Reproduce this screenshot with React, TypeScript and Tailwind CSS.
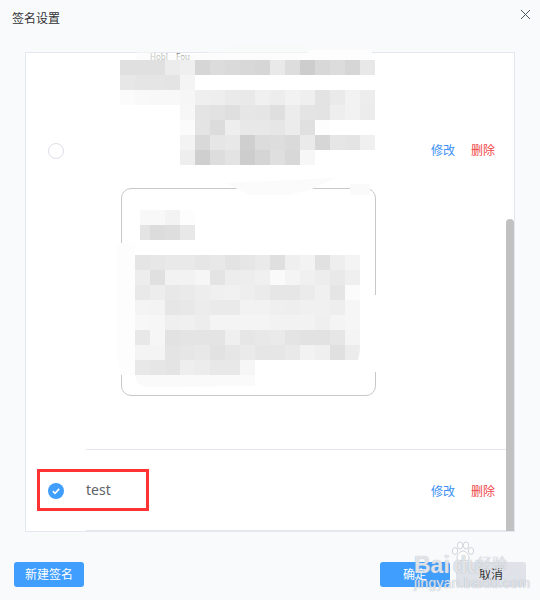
import React from "react";

const firstMosaic = [
  "e0 e0 e0 ec ef d6 dc da d8 d6 e9 dd cd d8 dc d6 e8",
  "e7 e5 e5 e4 f4",
  "fb f9 f8 f8 f6 ef ee ea e9 f0 ed f2 ef e3 ea f2 ed",
  "- - - - f7 e4 e2 df e6 e5 df ec e4 e3 ee f2 ec",
  "- - - - fb e4 dc ee e8 e8 e6 ec e0 fd",
  "- - - - f3 d9 e6 e8 cf dc dd da ea d6 e6 e4 f0",
  "- - - - ee cf dd e3 cd d5 df d8 f7",
];

const cardTitleMosaic = ["f8 f8 f3 fd", "e4 dc de e8"];

const cardBodyMosaic = [
  "e5 e7 e9 e9 e6 e8 e3 e6 ea df ef f3 e1 ee f4",
  "ed e0 f2 f2 f6 e4 ed ed f0 fa f4 f0 ed e9 ef",
  "e9 ed e8 ea ed f0 f1 ee eb e6 e6 eb f0 e5 fb",
  "f4 f3 e6 e8 ec ea ea f2 f2 ef ee f0 f0 ee f6",
  "f7 f6 ef f0 ed f4 f4 f4 f4 f2 f2 f2 ef f4 f6",
  "e8 f6 e2 e4 e4 e4 ef e6 e8 ea e4 e2 e2 e6 f4",
  "f4 f4 e4 e6 e8 e2 e6 ea e6 e6 e9 f2 ef e0 ec",
  "e8 e6 e4 ee ec e8 e8 f6",
];

const Mosaic = ({ rows }: { rows: string[] }) => (
  <div className="flex flex-col">
    {rows.map((row, i) => (
      <div key={i} className="flex h-[15px]">
        {row.split(" ").map((c, j) => (
          <div
            key={j}
            className="w-[15px] h-[15px]"
            style={{ backgroundColor: c === "-" ? "transparent" : `#${c}${c}${c}` }}
          />
        ))}
      </div>
    ))}
  </div>
);

const RowActions = () => (
  <div className="flex gap-4 text-xs leading-4">
    <span className="text-[#3b8ff5]">修改</span>
    <span className="text-[#f04545]">删除</span>
  </div>
);

export default function App() {
  return (
    <div className="relative w-[540px] h-[600px] overflow-hidden bg-[#f9fafc] font-['Noto_Sans','Noto_Sans_CJK_SC',sans-serif]">
      {/* Header */}
      <div className="flex justify-between h-[52px] pl-3 pr-[9px]">
        <h1 className="mt-[11px] text-xs leading-4 font-normal text-[#303133]">签名设置</h1>
        <svg className="mt-[9px] w-[11px] h-[11px] text-[#4a5a66]" viewBox="0 0 11 11" fill="none" stroke="currentColor" strokeWidth="1">
          <path d="M1 1l9 9M10 1l-9 9" />
        </svg>
      </div>

      {/* Signature list */}
      <div className="relative ml-[25px] w-[490px] h-[480px] overflow-hidden bg-white border border-[#e4e7ed]">
        <div className="pr-2">
          <div className="flex h-[135px]">
            <div className="w-[60px] pl-[22px] self-end mb-[29px]">
              <div className="w-4 h-4 rounded-full border border-[#dcdfe6] bg-white" />
            </div>
            <div className="flex-1 pl-[34px]">
              <div className="h-[7px] pl-[30px] text-[8px] leading-[7px] text-[#888] whitespace-pre">{"Hobl    Fou"}</div>
              <Mosaic rows={firstMosaic} />
            </div>
            <div className="self-end mb-[29px] pr-[11px]">
              <RowActions />
            </div>
          </div>

          <div className="h-[262px] ml-[60px] border-b border-[#e4e7ed]">
            <div className="ml-[35px] w-[255px] h-[208px] rounded-[10px] border border-[#c8c8c8] pl-[13px] pt-[21px]">
              <Mosaic rows={cardTitleMosaic} />
              <div className="mt-[15px]">
                <Mosaic rows={cardBodyMosaic} />
              </div>
            </div>
          </div>

          <div className="flex items-center h-[81px]">
            <div className="w-[60px] pl-[22px]">
              <div className="flex items-center justify-center w-4 h-4 rounded-full bg-[#409eff]">
                <svg className="w-[10px] h-[10px]" viewBox="0 0 10 10" fill="none" stroke="white" strokeWidth="1.6">
                  <path d="M1.8 5.2l2.2 2.1 4.2-4.4" />
                </svg>
              </div>
            </div>
            <div className="flex flex-1 items-center justify-between h-full pr-[11px] border-b border-[#e4e7ed]">
              <span className="text-sm text-[#606266]">test</span>
              <div className="pt-[3px]">
                <RowActions />
              </div>
            </div>
          </div>
        </div>

        {/* Scrollbar thumb */}
        <div className="absolute right-0 bottom-0 w-2 h-[312px] rounded-t bg-[#c1c1c1]" />
      </div>

      {/* Footer */}
      <div className="flex justify-between mt-[30px] px-[14px]">
        <button className="w-[70px] h-[25px] rounded-[3px] bg-[#409eff] text-xs text-white">新建签名</button>
        <div className="flex gap-[6px]">
          <button className="w-[70px] h-[25px] rounded-[3px] bg-[#409eff] text-xs text-white">确定</button>
          <button className="w-[70px] h-[25px] rounded-[3px] bg-[#dfe2e8] text-xs text-[#303133]">取消</button>
        </div>
      </div>

      {/* Redaction smudges over the content */}
      <svg className="absolute left-0 top-0 w-[540px] h-[600px] pointer-events-none" viewBox="0 0 540 600">
        <path d="M136 60 Q136 48 143 48 Q150 48 153 53 L190 56 L245 45 L305 44 L310 52 L372 52 L372 60 Z" fill="#f8f9f8" fillOpacity="0.55" />
        <path d="M310 50 L372 50 L372 60 L300 60 Z" fill="#fdfdfd" />
        <path d="M225 183 L335 178 L312 189 L290 195 L250 195 Z" fill="#fbfbfb" />
        <path d="M350 184 L370 184 L370 195 L350 195 Z" fill="#fafafa" />
        <path d="M117 243 L135 243 L135 375 L120 375 L117 360 Z" fill="#fdfdfd" />
        <rect x="135" y="210" width="5" height="30" fill="#ffffff" />
        <path d="M135 375 L255 375 L255 386 L145 387 Q136 384 135 375 Z" fill="#fafafa" />
        <path d="M360 295 L382 295 L382 372 L350 372 Q360 365 360 345 Z" fill="#ffffff" />
      </svg>

      {/* Annotation box */}
      <div className="absolute left-[37px] top-[469px] w-[112px] h-[42px] border-[3px] border-[#ff3333]" />

      {/* Watermark */}
      <div className="absolute left-[414px] top-[541px] w-[100px] h-[48px] text-white/70 pointer-events-none">
        <svg className="absolute left-[37px] top-0 w-[24px] h-[22px]" viewBox="0 0 24 22" fill="#ffffff" fillOpacity="0.75" stroke="#cfd3da" strokeWidth="1">
          <ellipse cx="4" cy="10" rx="2.6" ry="3.4" />
          <ellipse cx="9" cy="4.5" rx="2.6" ry="3.6" />
          <ellipse cx="15" cy="4.5" rx="2.6" ry="3.6" />
          <ellipse cx="20" cy="10" rx="2.6" ry="3.4" />
          <path d="M12 10c-3 0-6 4-6 7 0 3 3 3 6 2 3 1 6 1 6-2 0-3-3-7-6-7z" />
        </svg>
        <div className="absolute left-0 top-[12px] flex items-baseline font-['Liberation_Sans',sans-serif] font-bold text-[23px] leading-6 [text-shadow:0_0_1px_#9aa3b0]">
          <span>Bai</span>
          <span className="ml-[3px]">du</span>
        </div>
        <span className="absolute left-[63px] top-[14px] text-[15px] leading-4 [text-shadow:0_0_1px_#9aa3b0]">经验</span>
        <span className="absolute left-0 top-[34px] text-[14px] leading-4 font-['Liberation_Sans',sans-serif] whitespace-nowrap tracking-[0.2px] [text-shadow:0_0_1px_#9aa3b0]">jingyan.baidu.com</span>
      </div>
    </div>
  );
}
